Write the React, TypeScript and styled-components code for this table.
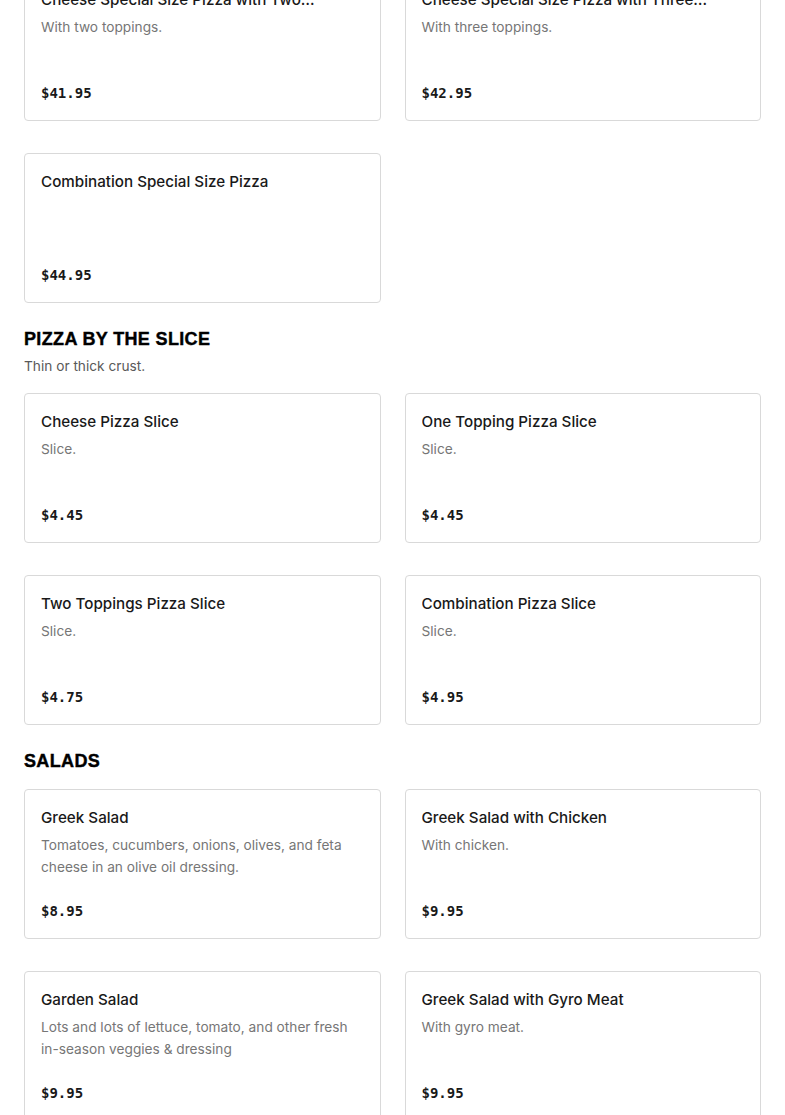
import React from 'react';
import styled, { createGlobalStyle } from 'styled-components';

const GlobalStyle = createGlobalStyle`
  body {
    margin: 0;
    background: #ffffff;
    font-family: Inter, "Liberation Sans", sans-serif;
  }
`;

type Item = { name: string; description?: string; price: string };
type Section = { title?: string; note?: string; items: Item[] };

const sections: Section[] = [
  {
    items: [
      { name: 'Cheese Special Size Pizza with Two Toppings', description: 'With two toppings.', price: '$41.95' },
      { name: 'Cheese Special Size Pizza with Three Toppings', description: 'With three toppings.', price: '$42.95' },
      { name: 'Combination Special Size Pizza', price: '$44.95' },
    ],
  },
  {
    title: 'Pizza by the Slice',
    note: 'Thin or thick crust.',
    items: [
      { name: 'Cheese Pizza Slice', description: 'Slice.', price: '$4.45' },
      { name: 'One Topping Pizza Slice', description: 'Slice.', price: '$4.45' },
      { name: 'Two Toppings Pizza Slice', description: 'Slice.', price: '$4.75' },
      { name: 'Combination Pizza Slice', description: 'Slice.', price: '$4.95' },
    ],
  },
  {
    title: 'Salads',
    items: [
      { name: 'Greek Salad', description: 'Tomatoes, cucumbers, onions, olives, and feta cheese in an olive oil dressing.', price: '$8.95' },
      { name: 'Greek Salad with Chicken', description: 'With chicken.', price: '$9.95' },
      { name: 'Garden Salad', description: 'Lots and lots of lettuce, tomato, and other fresh in-season veggies & dressing', price: '$9.95' },
      { name: 'Greek Salad with Gyro Meat', description: 'With gyro meat.', price: '$9.95' },
    ],
  },
];

export default function App() {
  return (
    <>
      <GlobalStyle />
      <Page>
        {sections.map((section, i) => (
          <MenuSection key={i}>
            {section.title && (
              <SectionHeader>
                <SectionTitle>{section.title}</SectionTitle>
                {section.note && <SectionNote>{section.note}</SectionNote>}
              </SectionHeader>
            )}
            <Grid>
              {section.items.map((item) => (
                <Card key={item.name}>
                  <ItemName>{item.name}</ItemName>
                  {item.description && <ItemDescription>{item.description}</ItemDescription>}
                  <Price>{item.price}</Price>
                </Card>
              ))}
            </Grid>
          </MenuSection>
        ))}
      </Page>
    </>
  );
}

const Page = styled.main`
  margin-top: -29px;
  padding: 0 24px 40px;
  display: flex;
  flex-direction: column;
  gap: 24px;
`;

const MenuSection = styled.section`
  display: flex;
  flex-direction: column;
  gap: 16px;
`;

const SectionHeader = styled.div`
  display: flex;
  flex-direction: column;
  gap: 4px;
`;

const SectionTitle = styled.h2`
  margin: 0;
  font-family: "Liberation Sans", Arial, sans-serif;
  font-weight: 700;
  font-size: 18px;
  line-height: 24px;
  letter-spacing: 0.35px;
  -webkit-text-stroke: 0.4px #000;
  text-transform: uppercase;
  color: #000;
`;

const SectionNote = styled.p`
  margin: 0;
  font-size: 13.7px;
  line-height: 22px;
  color: #595959;
`;

const Grid = styled.div`
  display: grid;
  grid-template-columns: 1fr 1fr;
  column-gap: 24px;
  row-gap: 32px;
`;

const Card = styled.div`
  box-sizing: border-box;
  height: 150px;
  min-width: 0;
  padding: 16px 16px 15px;
  border: 1px solid #d9d9d9;
  border-radius: 4px;
  display: flex;
  flex-direction: column;
  background: #fff;
`;

const ItemName = styled.h3`
  margin: 0;
  font-size: 15.2px;
  font-weight: 500;
  line-height: 24px;
  color: #191919;
  display: -webkit-box;
  -webkit-line-clamp: 1;
  -webkit-box-orient: vertical;
  overflow: hidden;
`;

const ItemDescription = styled.p`
  margin: 4px 0 0;
  font-size: 13.7px;
  line-height: 22px;
  color: #767676;
`;

const Price = styled.span`
  margin-top: auto;
  font-family: "DejaVu Sans Mono", "Liberation Mono", monospace;
  font-weight: 700;
  font-size: 14px;
  line-height: 24px;
  color: #191919;
`;
